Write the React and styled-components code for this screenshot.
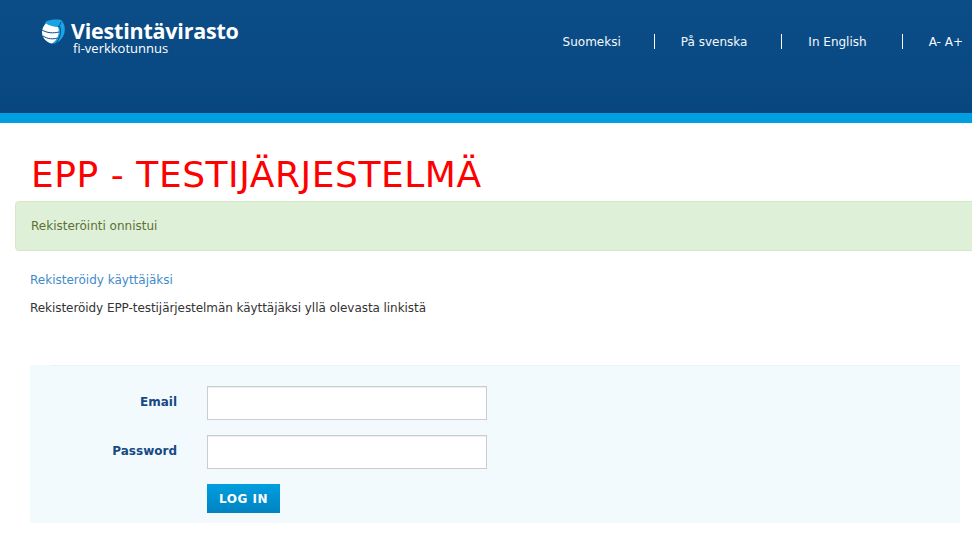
import React from "react";
import styled, { createGlobalStyle } from "styled-components";

const Global = createGlobalStyle`
  html, body { margin: 0; padding: 0; background: #fff; overflow: hidden; }
  body { font-family: "DejaVu Sans", Verdana, sans-serif; font-size: 12px; color: #333; }
  * { box-sizing: border-box; }
`;

const Page = styled.div`
  width: 972px;
  height: 554px;
  overflow: hidden;
`;

const Header = styled.header`
  height: 123px;
  background: linear-gradient(180deg, #0b4d87 0%, #0a4a84 60%, #09467e 100%);
  border-bottom: 10px solid #009fe0;
  display: flex;
  justify-content: space-between;
  align-items: flex-start;
`;

const Brand = styled.div`
  display: flex;
  align-items: flex-start;
  gap: 5px;
  padding: 19px 0 0 41px;
`;

const BrandText = styled.div`
  display: flex;
  flex-direction: column;
  color: #fff;
`;

const BrandName = styled.span`
  font-family: "Open Sans", sans-serif;
  font-size: 21.5px;
  font-weight: 700;
  line-height: 23px;
  letter-spacing: -0.22px;
  white-space: nowrap;
`;

const BrandSub = styled.span`
  font-family: "Open Sans", sans-serif;
  font-size: 13px;
  line-height: 12px;
  margin-left: 2px;
  padding-top: 0;
  height: 12px;
`;

const Nav = styled.nav`
  display: flex;
  align-items: flex-start;
  padding: 34px 9px 0 0;
`;

const NavItem = styled.a`
  color: #f6f9fc;
  font-size: 12px;
  line-height: 17px;
  height: 15px;
  white-space: nowrap;
  padding: 0 ${(p) => p.$right}px 0 ${(p) => p.$left}px;
  border-right: ${(p) => (p.$divider ? "1px solid #fff" : "none")};
`;

const Main = styled.main`
  padding: 26px 0 0 15px;
`;

const Title = styled.h1`
  margin: 0 0 0 16px;
  color: #ff0000;
  font-size: 36px;
  font-weight: 400;
  line-height: 52px;
  letter-spacing: 0.55px;
  white-space: nowrap;
`;

const Alert = styled.div`
  width: 975px;
  height: 50px;
  background: #dff0d8;
  border: 1px solid #d6e9c6;
  border-radius: 4px;
  color: #5d6f35;
  padding: 15px;
  line-height: 18px;
`;

const Content = styled.div`
  padding: 21px 12px 0 15px;
`;

const Link = styled.a`
  display: block;
  color: #428bca;
  line-height: 17px;
`;

const Text = styled.p`
  margin: 11px 0 0;
  color: #333;
  line-height: 17px;
  letter-spacing: -0.06px;
`;

const Panel = styled.form`
  position: relative;
  margin-top: 48px;
  width: 930px;
  height: 158px;
  background: #f3fafd;
  padding-top: 21px;
  &::before {
    content: "";
    position: absolute;
    top: 0;
    left: 20px;
    right: 0;
    height: 1px;
    background: #eef1f3;
  }
`;

const Row = styled.div`
  display: flex;
  align-items: flex-start;
  margin-bottom: 15px;
`;

const Label = styled.label`
  width: 147px;
  padding-top: 9px;
  text-align: right;
  color: #164a84;
  font-weight: 700;
  line-height: 15px;
`;

const Input = styled.input`
  display: block;
  width: 280px;
  height: 34px;
  margin-left: 30px;
  background: #fff;
  border: 1px solid #ccc;
  box-shadow: inset 0 1px 1px rgba(0, 0, 0, 0.075);
  padding: 6px 12px;
`;

const Submit = styled.button`
  display: block;
  width: 73px;
  height: 29px;
  margin-left: 177px;
  border: 0;
  padding: 0;
  background: linear-gradient(180deg, #009fe0 0%, #0083c0 100%);
  color: #fff;
  font-family: "DejaVu Sans", Verdana, sans-serif;
  font-size: 12px;
  font-weight: 700;
  letter-spacing: 0.5px;
`;

const Globe = () => (
  <svg width="25" height="26" viewBox="0 0 25 26" aria-hidden="true">
    <path d="M5 2.500C9 .6 16 .2 20 1c3.500 3.500 4.500 8 3.500 12.500-1 5-5 9.500-9.500 11-4.500.5-8-1.500-10.500-5C1 16 .5 10 5 2.500Z" fill="#1ba3e3" />
    <path d="M5 4.500C8 6.800 13 8 17 8c1 3 1 6 0 9-1 3-3.200 6-6 7.500C5 23.500 1 18.500 1 13c0-3 1.500-6 4-8.500Z" fill="#fff" />
    <path d="M1 11c5 3 11 3.500 17 2M2 17c4.500 3 10 3.500 14.500 2" stroke="#0a4b85" strokeWidth="1" fill="none" />
    <path d="M18.500 7c2 5 1.200 12-4 17.500M17 8c1.500-1.500 2.500-3.200 2.800-5" stroke="#0a4b85" strokeWidth="1" fill="none" />
  </svg>
);

export default function App() {
  return (
    <Page>
      <Global />
      <Header>
        <Brand>
          <Globe />
          <BrandText>
            <BrandName>Viestintävirasto</BrandName>
            <BrandSub>fi-verkkotunnus</BrandSub>
          </BrandText>
        </Brand>
        <Nav>
          <NavItem $left={0} $right={33} $divider>Suomeksi</NavItem>
          <NavItem $left={26} $right={34} $divider>På svenska</NavItem>
          <NavItem $left={26} $right={35} $divider>In English</NavItem>
          <NavItem $left={26} $right={0}>A- A+</NavItem>
        </Nav>
      </Header>
      <Main>
        <Title>EPP - TESTIJÄRJESTELMÄ</Title>
        <Alert>Rekisteröinti onnistui</Alert>
        <Content>
          <Link>Rekisteröidy käyttäjäksi</Link>
          <Text>Rekisteröidy EPP-testijärjestelmän käyttäjäksi yllä olevasta linkistä</Text>
          <Panel>
            <Row>
              <Label>Email</Label>
              <Input type="text" />
            </Row>
            <Row>
              <Label>Password</Label>
              <Input type="password" />
            </Row>
            <Submit type="button">LOG IN</Submit>
          </Panel>
        </Content>
      </Main>
    </Page>
  );
}
